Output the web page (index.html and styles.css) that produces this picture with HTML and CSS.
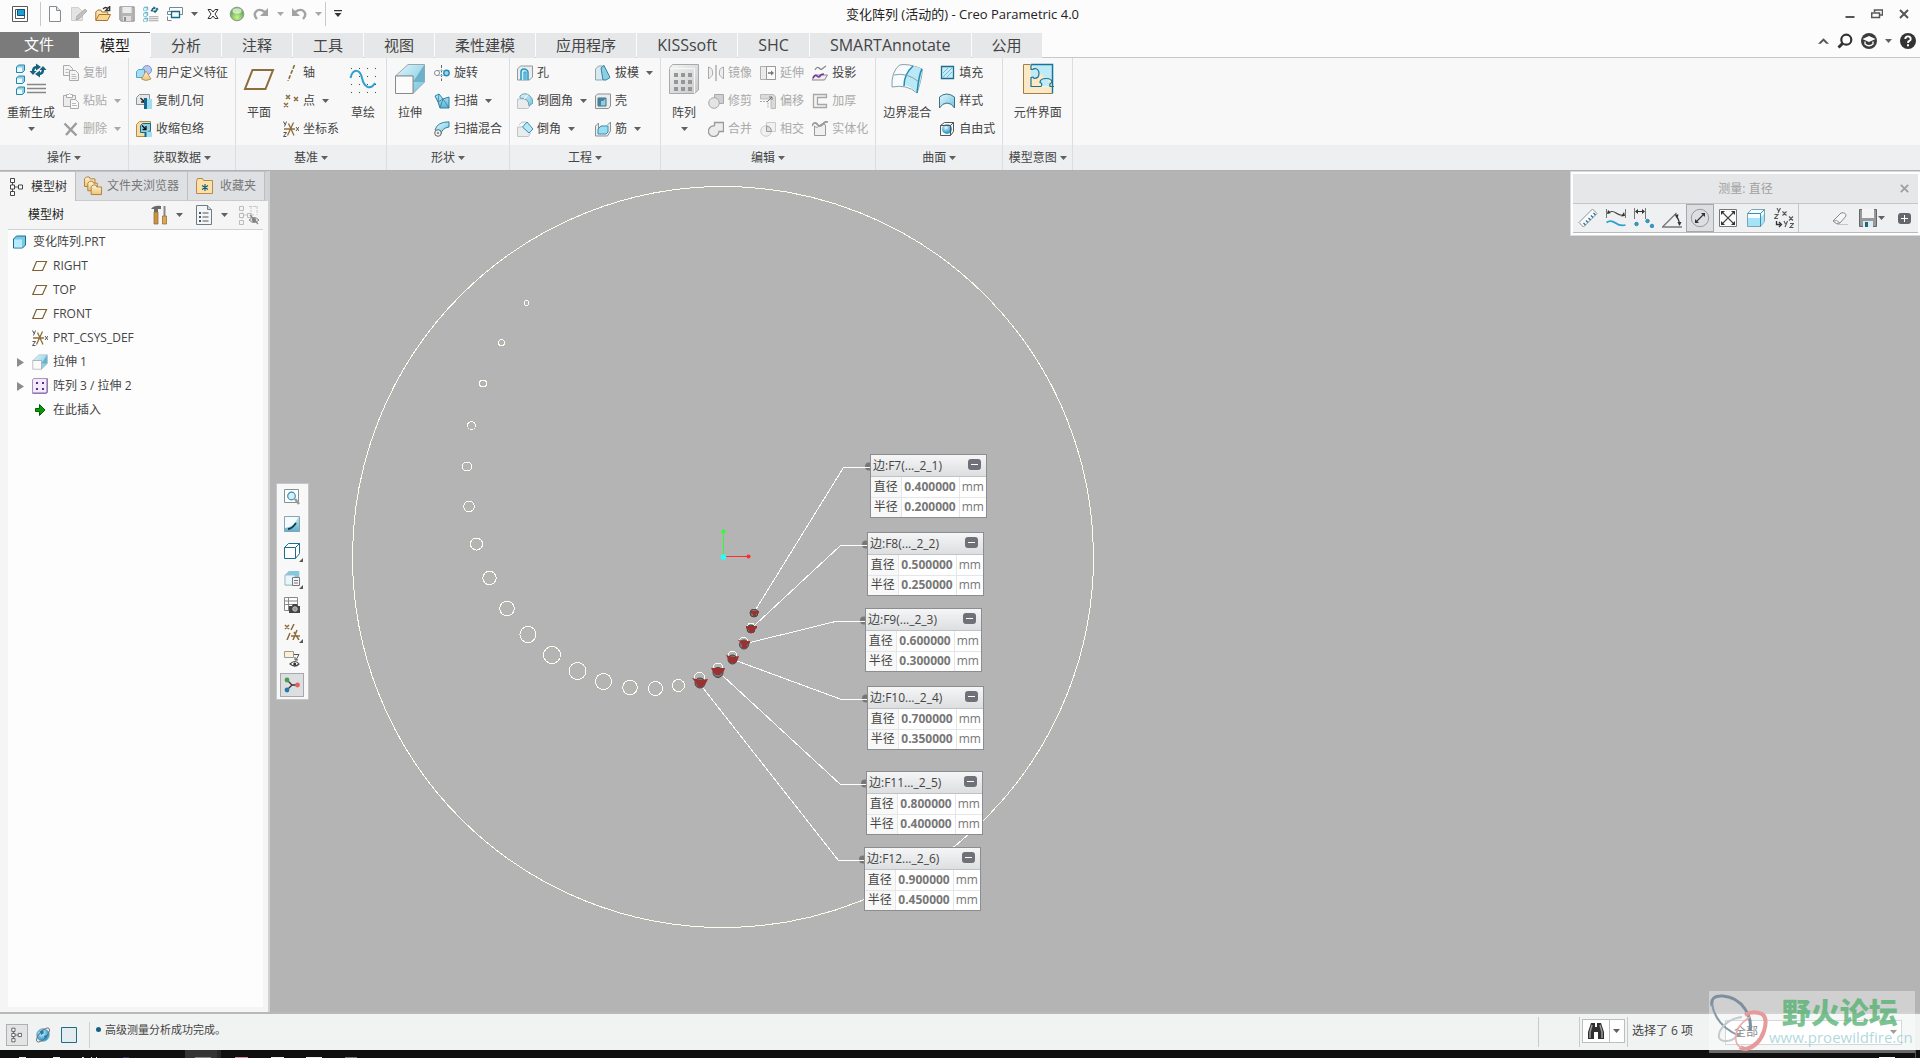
FILE: index.html
```html
<!DOCTYPE html>
<html lang="zh-CN">
<head>
<meta charset="utf-8">
<title>变化阵列 (活动的) - Creo Parametric 4.0</title>
<link rel="stylesheet" href="styles.css">
</head>
<body>
<svg class="sprite" width="0" height="0" aria-hidden="true">
<defs>
<linearGradient id="sky" x1="0" y1="0" x2="1" y2="1"><stop offset="0" stop-color="#e6f7fd"/><stop offset="1" stop-color="#6cc3e0"/></linearGradient>
<linearGradient id="deep" x1="0" y1="0" x2="0" y2="1"><stop offset="0" stop-color="#c3e9f6"/><stop offset="1" stop-color="#5fb0d0"/></linearGradient>
<linearGradient id="steel" x1="0" y1="0" x2="1" y2="1"><stop offset="0" stop-color="#f4f4f4"/><stop offset="1" stop-color="#c6c8ca"/></linearGradient>
<linearGradient id="sand" x1="0" y1="0" x2="0" y2="1"><stop offset="0" stop-color="#fdf3d8"/><stop offset="1" stop-color="#edc377"/></linearGradient>
<radialGradient id="lime" cx=".5" cy=".75"><stop offset="0" stop-color="#c6f58e"/><stop offset="1" stop-color="#6fb356"/></radialGradient>
<radialGradient id="ball" cx=".4" cy=".35"><stop offset="0" stop-color="#e9f9ff"/><stop offset="1" stop-color="#3aa0cb"/></radialGradient>
</defs>
<symbol id="caret" viewBox="0 0 7 4"><path d="M0 0h7L3.500 4z" fill="currentColor"/></symbol>
<symbol id="app" viewBox="0 0 16 16"><path d="M.5.500h15v15H.5z" fill="#fff" stroke="#5a5a5a"/><path d="M3.500 3.500h9v9h-9z" fill="#fff" stroke="#555"/><path d="M5.500 3.500h7v6h-7z" fill="#19a0dc" stroke="#17506c"/></symbol>
<symbol id="new" viewBox="0 0 16 16"><path d="M2.500.5h7l4 4v11h-11z" fill="#fdfdfd" stroke="#858b90"/><path d="M9.500.5v4h4" fill="#dfe3e6" stroke="#858b90"/></symbol>
<symbol id="edit" viewBox="0 0 16 16"><path d="M.5 1.500h7l4 4v9H.5z" fill="#e3e3e3" stroke="#cfcfcf"/><path d="M5 14l1-4 8-7 2 2-8 8z" fill="#c0c0c0" stroke="#a0a0a0" stroke-width=".7"/></symbol>
<symbol id="open" viewBox="0 0 16 16"><path d="M.8 14V6l2-2h3l1 2h6v3" fill="#f8e3b4" stroke="#a9752b"/><path d="M.8 14.500L4 8.500h11.500l-3 6z" fill="#f9d592" stroke="#a9752b"/><path d="M8 3q3-3 5 0M14.700.5v4h-4z" fill="none" stroke="#333" stroke-width="1.300"/></symbol>
<symbol id="save" viewBox="0 0 16 16"><path d="M.8.8h14.400v14.400H2L.8 14z" fill="#b5b5b5" stroke="#979797"/><path d="M3.500 1h9v6h-9z" fill="#ececec"/><path d="M4 10h8v5H4z" fill="#dedede"/><path d="M5 11h2v4H5z" fill="#8e8e8e"/></symbol>
<symbol id="regen" viewBox="0 0 32 32"><g fill="#8fd0e6" stroke="#2486aa"><path d="M1.500 4l2-2h6v5.500l-2 2h-6z"/><path d="M1.500 15l2-2h6v5.500l-2 2h-6z"/><path d="M1.500 26l2-2h6v5.500l-2 2h-6z"/></g><path d="M2 4.500h5v4.500H2zM2 15.500h5V20H2zM2 26.500h5V31H2z" fill="#eafaff"/><path d="M12 21.500h19M12 25.500h19M12 29.500h19" stroke="#878787" stroke-width="1.500"/><path d="M18 9q0-5 4-5M28 6q0 5-4 5" fill="none" stroke="#17627f" stroke-width="2.500"/><path d="M21 .5l5 3.500-5 3.500zM25 7.500v7L20 11zM14.500 8h7L18 12zM24.500 7h7L28 3z" fill="#17627f"/></symbol>
<symbol id="wins" viewBox="0 0 16 16"><g fill="#fff" stroke="#7c878d"><path d="M2.500 4.500v-3h13v7h-3M.5 10.500v4h4M.5 5.500h5v3h-5z"/></g><path d="M4.500 5.500h8v6h-8z" fill="#eefaff" stroke="#15688a" stroke-width="1.300"/></symbol>
<symbol id="closedoc" viewBox="0 0 16 16"><path d="M3 3.500h3L8 6l2-2.500h3L10 8l3 4.500h-3L8 10l-2 2.500H3L6 8z" fill="#fff" stroke="#333"/></symbol>
<symbol id="ballgreen" viewBox="0 0 16 16"><circle cx="8" cy="8" r="6.800" fill="url(#lime)" stroke="#8b9a8b"/><ellipse cx="8" cy="5" rx="4.500" ry="2.700" fill="#fff" opacity=".65"/></symbol>
<symbol id="redo" viewBox="0 0 16 16"><path d="M4 13Q0 9 3 5.500T12 6" fill="none" stroke="#a3a3a3" stroke-width="2.400"/><path d="M15 2v8H7z" fill="#a3a3a3"/></symbol>
<symbol id="undo" viewBox="0 0 16 16"><path d="M12 13q4-4 1-7.500T4 6" fill="none" stroke="#a3a3a3" stroke-width="2.400"/><path d="M1 2v8h8z" fill="#a3a3a3"/></symbol>
<symbol id="more" viewBox="0 0 8 8"><path d="M0 0h8v1.300H0zM.5 3h7L4 7z" fill="#333"/></symbol>
<symbol id="wmin" viewBox="0 0 12 12"><path d="M1.500 8h9v2h-9z" fill="#555"/></symbol>
<symbol id="wrest" viewBox="0 0 12 12"><path d="M3.500 4V2h8v5h-3M.7 5h7.800v4.500H.7z" fill="none" stroke="#555" stroke-width="1.500"/></symbol>
<symbol id="x" viewBox="0 0 12 12"><path d="M2 2l8 8M10 2l-8 8" stroke="currentColor" stroke-width="2"/></symbol>
<symbol id="up" viewBox="0 0 12 6"><path d="M0 6h3l3-3 3 3h3L6 0z" fill="#555"/></symbol>
<symbol id="find" viewBox="0 0 16 16"><circle cx="9.300" cy="6.700" r="5" fill="#fff" stroke="#333" stroke-width="2.200"/><path d="M1.500 14.500l4-4" stroke="#333" stroke-width="3"/></symbol>
<symbol id="cap" viewBox="0 0 16 16"><circle cx="8" cy="8" r="8" fill="#3c3c3c"/><path d="M1.500 6L8 3l6.500 3L8 9z" fill="#fff"/><path d="M4 8.500v2.500q4 3.500 8 0V8.500" fill="none" stroke="#fff" stroke-width="1.300"/></symbol>
<symbol id="help" viewBox="0 0 16 16"><circle cx="8" cy="8" r="8" fill="#333"/><path d="M5.300 6q0-2.600 2.700-2.600T10.700 6q0 1.300-1.500 2Q8 8.500 8 10" fill="none" stroke="#fff" stroke-width="1.900"/><path d="M7 11.300h2v2H7z" fill="#fff"/></symbol>
<symbol id="copy" viewBox="0 0 16 16"><g fill="#f4f4f4" stroke="#aaa"><path d="M.5.500h6l3 3v7h-9z"/><path d="M6.500 5.500h6l3 3v7h-9z"/></g><path d="M2.500 4.500h4M2.500 7.500h3M8.500 9.500h4M8.500 11.500h5M8.500 13.500h5" stroke="#bbb"/></symbol>
<symbol id="paste" viewBox="0 0 16 16"><path d="M.5 2.500h12v11H.5z" fill="#ececec" stroke="#aaa"/><path d="M3.500 1.500h2l1-1 1 1h2v3h-6z" fill="#fff" stroke="#aaa"/><path d="M7.500 6.500h5l3 3v6h-8z" fill="#fafafa" stroke="#aaa"/><path d="M9 10.500h4M9 12.500h5" stroke="#bbb"/></symbol>
<symbol id="del" viewBox="0 0 16 16"><path d="M1.500 2.500l12 12M13.500 2L3 14" stroke="#9c9c9c" stroke-width="2.400"/></symbol>
<symbol id="udf" viewBox="0 0 16 16"><circle cx="11" cy="5" r="4.500" fill="#b9c8ee" stroke="#7f93cc"/><path d="M.5 6.500l2-2h6v8h-8z" fill="#a5def2" stroke="#4da8cb"/><path d="M10 6L5.500 14q4 3 9.500 0z" fill="url(#sand)" stroke="#a98a53" stroke-width=".8"/></symbol>
<symbol id="copygeo" viewBox="0 0 16 16"><path d="M.5 4.500l3-3h10v7l-3 3H.5z" fill="#e5e8eb" stroke="#8e9396"/><path d="M4.500 5l4 4M8.500 5.500V9H5" stroke="#222" fill="none" stroke-width="1.300"/><path d="M9 6h7v10H9z" fill="#9ddcf2"/><path d="M8 5h3v11H8z" fill="#15688a"/></symbol>
<symbol id="shrink" viewBox="0 0 16 16"><path d="M.5 3.500l3-3h11v11l-3 4H.5z" fill="#f7dca4" stroke="#b78b42"/><path d="M4.500 4.500l2-2h8v7l-3 2h-7z" fill="#8fcfe6" stroke="#15688a"/><path d="M6 4.500l4 4M10 5v3.500H6.500" stroke="#111" fill="none" stroke-width="1.300"/><path d="M9 11h7v5H9z" fill="#9fe0f4"/><path d="M9.500 11v5" stroke="#15688a" stroke-width="2"/></symbol>
<symbol id="plane" viewBox="0 0 32 32"><path d="M9.500 7H30l-7.500 19H2z" fill="none" stroke="#8c6d3b" stroke-width="2"/></symbol>
<symbol id="axis" viewBox="0 0 16 16"><path d="M11.500 0L5 16" stroke="#8c6d3b" stroke-width="1.600" stroke-dasharray="4 1.500"/></symbol>
<symbol id="point" viewBox="0 0 16 16"><path d="M3 2l4 4M7 2L3 6M11 4l4 4M15 4l-4 4M1 10l4 4M5 10l-4 4" stroke="#8c6d3b" stroke-width="1.500"/></symbol>
<symbol id="csys" viewBox="0 0 16 16"><path d="M1 8h11M4.500 14.500L10.500 1.500M5.500 2.500L11 14.500" stroke="#8c6d3b" stroke-width="1.300"/><path d="M.5.500l1.500 3M3.500.5L1.500 5.500M.5 11.500h3l-3 4h3M13 6l3 4M16 6l-3 4" fill="none" stroke="#444" stroke-width=".9"/></symbol>
<symbol id="sketch" viewBox="0 0 32 32"><path d="M4 5.500h26M4 13.500h26M4 21.500h26M4 29.500h26" stroke="#444" stroke-dasharray="1 7"/><path d="M3.500 15C6 5 13 6 15 15s8 13 13 5" fill="none" stroke="#2c9fd2" stroke-width="2"/></symbol>
<symbol id="extrude" viewBox="0 0 32 32"><path d="M1.500 13L14 1.500h16.500V19L19 30.500V13z" fill="url(#sky)" stroke="#9aa8ae"/><path d="M30.500 1.500V19H19z" fill="#6cb0ca"/><path d="M1.500 13H19v17.500H1.500z" fill="#fbfbfb" stroke="#8a8a8a"/></symbol>
<symbol id="revolve" viewBox="0 0 16 16"><path d="M7.500 0v16" stroke="#666" stroke-dasharray="3 1.500"/><path d="M3 5.500h10M3 10.500h10" stroke="#9ccbdc"/><circle cx="3" cy="8" r="2.500" fill="#fff" stroke="#889"/><circle cx="12.500" cy="8" r="2.700" fill="#93d7ef" stroke="#2a8ab0" stroke-width="1.400"/></symbol>
<symbol id="sweep" viewBox="0 0 16 16"><path d="M1 3l4-2 4 5 6-2v11H6L4 9z" fill="url(#deep)" stroke="#2a83a5"/><path d="M5 1L4 9M9 6l-5 3M9 6l6 9M9 6L6 15" stroke="#2a83a5" stroke-width=".8" fill="none"/></symbol>
<symbol id="blend" viewBox="0 0 16 16"><path d="M1 9Q3 1 15 .8V6Q8 7 7 13z" fill="url(#sky)" stroke="#2a83a5"/><circle cx="4" cy="12" r="3.300" fill="#eee" stroke="#666"/><circle cx="4" cy="12" r="1" fill="#777"/></symbol>
<symbol id="hole" viewBox="0 0 16 16"><path d="M.5 4l3-3h12v11l-3 3H.5z" fill="#eaecee" stroke="#92989c"/><path d="M4 15V7Q4 4 7 4t4 3v8" fill="#c9eefa" stroke="#2995be" stroke-width="1.500"/><path d="M7 15V7h2v8" fill="#9adcf2" stroke="#2995be"/></symbol>
<symbol id="round" viewBox="0 0 16 16"><path d="M.5 6h8q4 1 4 8l-2 1.500H.5z" fill="#e9ebec" stroke="#bfc4c7"/><path d="M3 3q4-4 9-1 4 3 4 8l-4 3Q12 5 3 5z" fill="url(#sky)" stroke="#6d9eb0"/><path d="M7 6L11 1.500" stroke="#fff"/></symbol>
<symbol id="chamfer" viewBox="0 0 16 16"><path d="M.5 6h5l8 6-2 3.500H.5zM2 4l3-3h4" fill="#e9ebec" stroke="#bfc4c7"/><path d="M5.500 6L10 1l6 7-4 4z" fill="#b7e7f6" stroke="#3a8eac"/></symbol>
<symbol id="draft" viewBox="0 0 16 16"><path d="M.5 4l3-3h6v11l-2 3H.5z" fill="#d7eaf1" stroke="#93a5ad"/><path d="M6 3l3-2.500 6 12-4 2.500H8z" fill="#8fcde3" stroke="#2f86a5"/></symbol>
<symbol id="shell" viewBox="0 0 16 16"><path d="M.5 3l2-2h13v12l-2 2.500H.5z" fill="#ececee" stroke="#8d9194"/><path d="M3 5h8v8H3z" fill="#8fcfe6" stroke="#456c7a"/><path d="M3 5h8l-3 3H6v5H3z" fill="#46829a"/></symbol>
<symbol id="rib" viewBox="0 0 16 16"><path d="M.5 5l3-3v6M12.500 4L15.500 1v9l-3 5H.5V5" fill="#e8ebec" stroke="#8d9194"/><path d="M3 8l3-3h7v6l-2 2H3z" fill="#9bddf0" stroke="#3a90b0"/></symbol>
<symbol id="pattern" viewBox="0 0 32 32"><path d="M1.500 5l3-3.500h26V27l-4 3.500h-25z" fill="url(#steel)" stroke="#a9a9a9"/><path d="M1.500 5.500h25v25" fill="none" stroke="#f8f8f8"/><path d="M6 10h4v4H6zM13 10h4v4h-4zM20 10h4v4h-4zM6 17h4v4H6zM13 17h4v4h-4zM20 17h4v4h-4zM6 24h4v4H6zM13 24h4v4h-4zM20 24h4v4h-4z" fill="#969696"/></symbol>
<symbol id="mirror" viewBox="0 0 16 16"><path d="M.5 14V2q5 1 4 8zM15.500 14V2q-5 1-4 8z" fill="#eee" stroke="#aaa"/><path d="M8 0v16" stroke="#aaa" stroke-width="1.400"/></symbol>
<symbol id="trim" viewBox="0 0 16 16"><path d="M6.500 1.500h9v9h-9z" fill="#d0d0d0" stroke="#a8a8a8"/><circle cx="6" cy="10" r="5.300" fill="#e4e4e4" stroke="#a8a8a8"/></symbol>
<symbol id="merge" viewBox="0 0 16 16"><path d="M6.500 5V1.500h9v9H11A5.300 5.300 0 1 1 6.500 5" fill="#ececec" stroke="#999" stroke-width="1.300"/></symbol>
<symbol id="extend" viewBox="0 0 16 16"><path d="M.5 1.500h15v13H.5z" fill="#ebebeb" stroke="#b0b0b0"/><path d="M6.500 1.500h9v13h-9z" fill="#fafafa" stroke="#999"/><path d="M8 8h4" stroke="#777" stroke-width="1.500"/><path d="M11 5.500L14 8l-3 2.500z" fill="#777"/></symbol>
<symbol id="offset" viewBox="0 0 16 16"><path d="M.5 1.500h13l2 2v12H11V6H.5z" fill="#dadada" stroke="#bbb"/><path d="M0 8.500h8v7" fill="none" stroke="#aaa" stroke-dasharray="2 1"/><path d="M7 9l5-5M9 4h3v3" fill="none" stroke="#777"/></symbol>
<symbol id="intersect" viewBox="0 0 16 16"><path d="M6.500 1.500h9v9h-9z" fill="#f0f0f0" stroke="#ccc"/><circle cx="6" cy="10" r="5.300" fill="#f0f0f0" stroke="#ccc"/><path d="M6.500 5q5 1 4.800 5.500H6.500z" fill="#ddd" stroke="#999"/></symbol>
<symbol id="project" viewBox="0 0 16 16"><path d="M3 5q2-4 4-2t3 1 4-3" fill="none" stroke="#888" stroke-width="1.200"/><path d="M0 15l3-5h12.500l-3 5z" fill="#eee" stroke="#888"/><path d="M1 13q2-4 4-2t3 0 4-2" fill="none" stroke="#7a35a5" stroke-width="1.700"/></symbol>
<symbol id="thicken" viewBox="0 0 16 16"><path d="M1.500 1.500h13v3h-9v7h9v3h-13z" fill="#f3f3f3" stroke="#a6a6a6" stroke-width="1.300"/></symbol>
<symbol id="solid" viewBox="0 0 16 16"><path d="M2.500 5v9.500h11V4Q10 1 8 4 5 8 2.500 5z" fill="#f0f0f0" stroke="#999"/><path d="M0 5q2-5 5-2 3 4 6 0 2-3 5-2" fill="none" stroke="#999" stroke-width="1.800"/></symbol>
<symbol id="boundary" viewBox="0 0 32 32"><path d="M8.500 2Q17 0 31 6q1 6-5 24Q16 21 1 24 0 9 8.500 2z" fill="#f6fcfe" stroke="#8e9ea5"/><path d="M22 3q5 1 9 3 0 9-5 24-5-6-12-8 0-11 8-19z" fill="#b9e9f7"/><path d="M22 3q-9 8-9 20" fill="none" stroke="#238bb4" stroke-width="1.500"/><path d="M3 12q13-3 25 7" fill="none" stroke="#8e9ea5"/><path d="M31 6q-3 5-5 24" fill="none" stroke="#238bb4" stroke-width="1.500"/></symbol>
<symbol id="fill" viewBox="0 0 16 16"><path d="M2.500 1.500h12v12h-12z" fill="#c6ecf8" stroke="#1d6d8f" stroke-width="1.300"/><path d="M4 8l5-5M4 12l9-9M8 12l5-5" stroke="#6dbdd9"/></symbol>
<symbol id="style" viewBox="0 0 16 16"><path d="M.5 4q7-6 15 0v11q-3-5-7.500-5T.5 15z" fill="url(#sky)" stroke="#3b6f84"/></symbol>
<symbol id="freestyle" viewBox="0 0 16 16"><circle cx="8" cy="8" r="5" fill="url(#ball)"/><path d="M1.500 4.500h10v10h-10zM5.500 1.500h9v9M1.500 4.500l4-3M11.500 4.500l3-3M11.500 14.500l3-4" fill="none" stroke="#555"/></symbol>
<symbol id="puzzle" viewBox="0 0 32 32"><path d="M1 1.500h8v22h22v7H1z" fill="#fbe9c6"/><path d="M9 1.500h22.500V23H9z" fill="#bfeaf8"/><path d="M9 1.500v5q3 0 3-1 5 0 5 5t-5 5q0-2-3-1v9h10q2-3-1-4 0-4 6-4t6 4q-3 1-2 4h4" fill="#fbe9c6" stroke="#1c7396" stroke-width="1.200"/><path d="M9 1.500h21.500v29" fill="none" stroke="#1c7396" stroke-width="1.400"/><path d="M8 1.500H1.500v29h29" fill="none" stroke="#a77e3f"/></symbol>
<symbol id="nodes" viewBox="0 0 16 20"><path d="M3.500 3v14M4 10h8" stroke="#555"/><path d="M1.500 1.500h4v4h-4zM1.500 8h4v4h-4zM1.500 14.500h4v4h-4zM9.500 8h4v4h-4z" fill="#fff" stroke="#444"/></symbol>
<symbol id="folders" viewBox="0 0 20 20"><g fill="url(#sand)" stroke="#ad8137"><path d="M.5 2.500l2-2h3l1 2h5v8H.5z"/><path d="M4 7l2-2h3l1 2h4v8H4z"/><path d="M7.500 11l2-2h3l1 2h5v8h-11z"/></g></symbol>
<symbol id="fav" viewBox="0 0 18 18"><path d="M.5 4.500l1-3h5l1 2h9v13H.5z" fill="#fbe0aa" stroke="#b78a45"/><path d="M9 7v7M6 8.500l6 4M12 8.500l-6 4" stroke="#125a78" stroke-width="1.100"/></symbol>
<symbol id="tools" viewBox="0 0 20 20"><path d="M2 4q3-4 10-3v3H9v3H5V4z" fill="#6a6a6a"/><path d="M5 7h4v12H5z" fill="#c99545" stroke="#8d6428" stroke-width=".7"/><path d="M14.500 1h2v10h-2z" fill="#888"/><path d="M13.500 11h4v8h-4z" fill="#dba85a" stroke="#8d6428" stroke-width=".7"/></symbol>
<symbol id="list" viewBox="0 0 16 20"><path d="M.5.500h11l4 4v15H.5z" fill="#f2f6f8" stroke="#6f7c83"/><path d="M11.500.5v4h4" fill="#cdd6da" stroke="#6f7c83"/><path d="M6.500 8h6M6.500 12h6M6.500 16h6" stroke="#555"/><path d="M3 7h2v2H3zM3 11h2v2H3zM3 15h2v2H3z" fill="#555"/></symbol>
<symbol id="hidden" viewBox="0 0 20 20"><path d="M3 3v14M5 10h10M10 1.500h9M12 1v6M18 1v9" fill="none" stroke="#c8c8c8" stroke-dasharray="3 1"/><path d="M.5 1.500h4v4h-4zM.5 8.500h4v4h-4zM.5 15.500h4v4h-4zM8.500 8.500h4v4h-4z" fill="#f4f4f4" stroke="#bbb"/><path d="M10 15q5-5 10 0-5 5-10 0z" fill="#ddd" stroke="#888"/><circle cx="15" cy="15" r="2" fill="#777"/><path d="M11 10l8 9" stroke="#888" stroke-width="1.200"/></symbol>
<symbol id="part" viewBox="0 0 16 16"><path d="M1.500 5l3-3h9v9l-3 3h-9z" fill="#79c9e6" stroke="#1a6e8e"/><path d="M2 5.500h8v8H2z" fill="#b5ebfb"/></symbol>
<symbol id="pl" viewBox="0 0 16 16"><path d="M4.500 3.500h10l-4 9H.8z" fill="none" stroke="#7d6030" stroke-width="1.200"/></symbol>
<symbol id="patsmall" viewBox="0 0 16 16"><path d="M.5 2l1-1.500h14V14L14 15.500H.5z" fill="#f2ecfa" stroke="#a795bf"/><path d="M15 1v14H1" fill="none" stroke="#8061aa"/><path d="M4 4h2v2H4zM10 4h2v2h-2zM4 10h2v2H4zM10 10h2v2h-2z" fill="#5b2d8c"/></symbol>
<symbol id="insert" viewBox="0 0 16 16"><path d="M3.500 6.500h4v-4l5.500 5.500-5.500 5.500v-4h-4z" fill="#089908" stroke="#056005"/></symbol>
<symbol id="tri" viewBox="0 0 7 9"><path d="M0 0l7 4.500L0 9z" fill="#8c8c8c"/></symbol>
<symbol id="refit" viewBox="0 0 16 16"><path d="M.5.500h14v13H.5z" fill="#fff" stroke="#8a8f93"/><circle cx="7.500" cy="7" r="3.800" fill="#d4f1fb" stroke="#3b8fb0" stroke-width="1.200"/><path d="M11 10l4 5" stroke="#999" stroke-width="2.500"/></symbol>
<symbol id="repaint" viewBox="0 0 16 16"><path d="M.5.500h15v15H.5z" fill="url(#deep)" stroke="#8aa3ad"/><path d="M1 1h13Q11 11 1 12z" fill="#f3fbfe"/><path d="M4 13q4 0 8-6" fill="none" stroke="#143e50" stroke-width="1.800"/></symbol>
<symbol id="cube" viewBox="0 0 16 16"><path d="M.5 4.500l4-4h11v10l-4 5H.5zM.5 4.500h11v11M11.500 4.500l4-4" fill="#fff" stroke="#1b6c8e"/></symbol>
<symbol id="saved" viewBox="0 0 16 16"><path d="M.8 5l4-4h10.500v10l-4 4.500H.8z" fill="#83c9e2"/><path d="M1 5h10v10H1z" fill="#e6f7fc" stroke="#a9bcc4"/><path d="M8.500 7.500h7v8h-7z" fill="#f5f5f5" stroke="#777"/><path d="M10 10.500h4M10 13h4" stroke="#777"/></symbol>
<symbol id="viewmgr" viewBox="0 0 16 16"><path d="M.5.500h13v13H.5zM.5 4h13M.5 7.500h13M4.500 0v13" fill="#fff" stroke="#888"/><path d="M5 9h3l1-2h4l1 2h2v7H5z" fill="#444"/><circle cx="11" cy="12" r="2.300" fill="#999" stroke="#ddd" stroke-width=".7"/></symbol>
<symbol id="datumshow" viewBox="0 0 16 16"><path d="M1 1l4 4M5 1L1 5M10 0L7 6M6 9L3 16M7 12h9M9 16l4-10M10 8l5 8" stroke="#8c6d3b" stroke-width="1.500"/></symbol>
<symbol id="annoshow" viewBox="0 0 16 16"><path d="M.5.500h9v6h-9z" fill="#fdf1d2" stroke="#999"/><path d="M10 3.500h5L12 9M11 6v3h3" fill="none" stroke="#555"/><path d="M6 13q5-5 9 0-4 4-9 0z" fill="#fff" stroke="#444" stroke-width="1.200"/><circle cx="10.700" cy="13" r="1.500" fill="#333"/></symbol>
<symbol id="spin" viewBox="0 0 16 16"><path d="M3 3l5 5-5 5M8 8h6" fill="none" stroke="#333" stroke-width="1.300"/><circle cx="3" cy="3" r="2.400" fill="#499c4d"/><circle cx="3" cy="13" r="2.400" fill="#2479a5"/><circle cx="13.500" cy="8" r="2.400" fill="#e36060"/></symbol>
<symbol id="ruler" viewBox="0 0 20 20"><path d="M1 14.500L14.500 1l4.500 4.500L5.500 19z" fill="#f9fafb" stroke="#8e9498"/><path d="M7.500 17l-2-2M10 14.500l-2-2M12.500 12l-2-2M15 9.500l-2-2M17.500 7l-2-2" stroke="#276d8c" stroke-width="1.200"/></symbol>
<symbol id="length" viewBox="0 0 20 20"><path d="M.5 1v9M19.500 1v9" stroke="#777"/><path d="M2 5q4-3 8 0t8 2" fill="none" stroke="#444" stroke-width="1.200"/><path d="M1 6l1-4 3 3zM19 8l-4 .5L18 4z" fill="#333"/><path d="M.5 14.500q4-3 9 .5t10 2" fill="none" stroke="#2c9fd2" stroke-width="1.800"/></symbol>
<symbol id="distance" viewBox="0 0 20 20"><path d="M.5 0v11M11.500 0v11" stroke="#777"/><path d="M2 3.500h8" stroke="#333"/><path d="M1 3.500l3-2.500v5zM11 3.500L8 1v5z" fill="#333"/><g fill="#2c9fd2" stroke="#16688a" stroke-width=".6"><circle cx="2.500" cy="16" r="1.800"/><circle cx="13.500" cy="13" r="1.800"/><circle cx="18" cy="18" r="1.800"/></g></symbol>
<symbol id="angle" viewBox="0 0 20 20"><path d="M.5 19L14.500 5M0 19h20" stroke="#777" stroke-width="1.300"/><path d="M14 8q3.500 4 3.500 9" fill="none" stroke="#333" stroke-width="1.200"/><path d="M12.500 6.500h4l-1 4zM15.500 14h4l-2 4z" fill="#333"/></symbol>
<symbol id="diam" viewBox="0 0 20 20"><circle cx="10" cy="10" r="8.700" fill="none" stroke="#999"/><path d="M6 14l8-8" stroke="#333" stroke-width="1.100"/><path d="M15 5v4l-4-4zM5 15v-4l4 4z" fill="#333"/></symbol>
<symbol id="area" viewBox="0 0 20 20"><path d="M1.500 1.500h17v17h-17z" fill="#fafafa" stroke="#777"/><path d="M4 4l12 12M16 4L4 16" stroke="#444" stroke-width="1.100"/><path d="M3 3h4L3 7zM17 3v4l-4-4zM3 17v-4l4 4zM17 17h-4l4-4z" fill="#333"/></symbol>
<symbol id="volume" viewBox="0 0 20 20"><path d="M1.500 5.500l4-4h13v12l-4 5h-13z" fill="#f5fcff" stroke="#7aa3b3"/><path d="M2 10h12l4-4v8l-4 4H2z" fill="#a5e4f8"/><path d="M1.500 5.500h13v13M14.500 5.500l4-4" fill="none" stroke="#3a8fb0"/></symbol>
<symbol id="xform" viewBox="0 0 20 20"><path d="M3 0l1.500 3M6.500 0L4 5M8.500 3.500l4 4M12.500 3.500l-4 4M.5 6.500h3.500l-3.500 4H4M15 8.500l4 4M19 8.500l-4 4M10 13l1.500 3M13.500 13l-2.500 6M16 15.500h3.500l-3.500 4h3.500" fill="none" stroke="#555" stroke-width="1.100"/><path d="M2.500 13v3.500h4M5 14l2.500 2.500L5 19" fill="none" stroke="#333" stroke-width="1.300"/></symbol>
<symbol id="eraser" viewBox="0 0 16 16"><path d="M1 11l8-8q5-1 5 3l-6 7q-4 2-7-2z" fill="#f6f6f6" stroke="#888"/><path d="M5 14.500h11" stroke="#c5c5c5"/><path d="M1 11q4-2 7 2" fill="none" stroke="#999"/></symbol>
<symbol id="disk" viewBox="0 0 18 18"><path d="M.5.500h17v17H.5z" fill="#999" stroke="#666"/><path d="M3 0h12v9H3z" fill="#f4f4f4"/><path d="M4 12h10v6H4z" fill="#d7eef6"/><path d="M6 13h3v5H6z" fill="#26627c"/></symbol>
<symbol id="globe" viewBox="0 0 18 18"><circle cx="9" cy="9" r="7" fill="url(#ball)" stroke="#5aa5c5"/><path d="M5 5l4-2 1 4-3 2zM10 10l4-1-2 5z" fill="#187fb4"/><ellipse cx="9" cy="9" rx="10" ry="4" transform="rotate(-48 9 9)" fill="none" stroke="#666"/></symbol>
<symbol id="blank" viewBox="0 0 16 16"><path d="M.5.500h15v15H.5z" fill="#e3ecf0" stroke="#226a86"/></symbol>
<symbol id="bino" viewBox="0 0 18 18"><path d="M4 1h4v4h2V1h4l3 9v7h-6v-7H7v7H1v-7z" fill="#303030"/><path d="M5 3L3 10v6M13 3l2 7v6" fill="none" stroke="#999" stroke-width="1.500"/></symbol>
</svg>

<header class="titlebar">
  <div class="quick">
    <button class="qb" aria-label="系统"><svg><use href="#app"/></svg></button>
    <i class="vsep"></i>
    <button class="qb" aria-label="新建"><svg><use href="#new"/></svg></button>
    <button class="qb" aria-label="编辑"><svg><use href="#edit"/></svg></button>
    <button class="qb" aria-label="打开"><svg><use href="#open"/></svg></button>
    <button class="qb" aria-label="保存"><svg><use href="#save"/></svg></button>
    <button class="qb" aria-label="再生"><svg><use href="#regen"/></svg></button>
    <button class="qb" aria-label="窗口"><svg><use href="#wins"/></svg></button>
    <button class="qc" aria-label="窗口列表"><svg class="caret"><use href="#caret"/></svg></button>
    <button class="qb" aria-label="关闭窗口"><svg><use href="#closedoc"/></svg></button>
    <button class="qb" aria-label="状态"><svg><use href="#ballgreen"/></svg></button>
    <button class="qb" aria-label="重做"><svg><use href="#redo"/></svg></button>
    <button class="qc off" aria-label="重做列表"><svg class="caret"><use href="#caret"/></svg></button>
    <button class="qb" aria-label="撤销"><svg><use href="#undo"/></svg></button>
    <button class="qc off" aria-label="撤销列表"><svg class="caret"><use href="#caret"/></svg></button>
    <i class="vsep"></i>
    <button class="qc" aria-label="自定义"><svg class="more"><use href="#more"/></svg></button>
  </div>
  <h1 class="title">变化阵列 (活动的) - Creo Parametric 4.0</h1>
  <div class="winctl">
    <button aria-label="最小化"><svg><use href="#wmin"/></svg></button>
    <button aria-label="还原"><svg><use href="#wrest"/></svg></button>
    <button aria-label="关闭"><svg><use href="#x"/></svg></button>
  </div>
</header>

<nav class="tabs">
  <button class="tab file">文件</button>
  <button class="tab active">模型</button>
  <button class="tab">分析</button>
  <button class="tab">注释</button>
  <button class="tab">工具</button>
  <button class="tab">视图</button>
  <button class="tab">柔性建模</button>
  <button class="tab">应用程序</button>
  <button class="tab latin">KISSsoft</button>
  <button class="tab latin">SHC</button>
  <button class="tab latin">SMARTAnnotate</button>
  <button class="tab">公用</button>
  <div class="assist">
    <button aria-label="折叠功能区"><svg class="up"><use href="#up"/></svg></button>
    <button aria-label="搜索"><svg><use href="#find"/></svg></button>
    <button aria-label="学习"><svg><use href="#cap"/></svg></button>
    <button aria-label="学习列表"><svg class="caret"><use href="#caret"/></svg></button>
    <button aria-label="帮助"><svg><use href="#help"/></svg></button>
  </div>
</nav>

<section class="ribbon">
  <div class="group">
    <div class="tools">
      <button class="big wide"><svg><use href="#regen"/></svg>重新生成<svg class="caret"><use href="#caret"/></svg></button>
      <div class="col">
        <button class="sm off"><svg><use href="#copy"/></svg>复制</button>
        <button class="sm off"><svg><use href="#paste"/></svg>粘贴<svg class="caret"><use href="#caret"/></svg></button>
        <button class="sm off"><svg><use href="#del"/></svg>删除<svg class="caret"><use href="#caret"/></svg></button>
      </div>
    </div>
    <button class="glabel">操作<svg class="caret"><use href="#caret"/></svg></button>
  </div>
  <div class="group">
    <div class="tools">
      <div class="col">
        <button class="sm"><svg><use href="#udf"/></svg>用户定义特征</button>
        <button class="sm"><svg><use href="#copygeo"/></svg>复制几何</button>
        <button class="sm"><svg><use href="#shrink"/></svg>收缩包络</button>
      </div>
    </div>
    <button class="glabel">获取数据<svg class="caret"><use href="#caret"/></svg></button>
  </div>
  <div class="group">
    <div class="tools">
      <button class="big"><svg><use href="#plane"/></svg>平面</button>
      <div class="col">
        <button class="sm"><svg><use href="#axis"/></svg>轴</button>
        <button class="sm"><svg><use href="#point"/></svg>点<svg class="caret"><use href="#caret"/></svg></button>
        <button class="sm"><svg><use href="#csys"/></svg>坐标系</button>
      </div>
      <button class="big"><svg><use href="#sketch"/></svg>草绘</button>
    </div>
    <button class="glabel">基准<svg class="caret"><use href="#caret"/></svg></button>
  </div>
  <div class="group">
    <div class="tools">
      <button class="big"><svg><use href="#extrude"/></svg>拉伸</button>
      <div class="col">
        <button class="sm"><svg><use href="#revolve"/></svg>旋转</button>
        <button class="sm"><svg><use href="#sweep"/></svg>扫描<svg class="caret"><use href="#caret"/></svg></button>
        <button class="sm"><svg><use href="#blend"/></svg>扫描混合</button>
      </div>
    </div>
    <button class="glabel">形状<svg class="caret"><use href="#caret"/></svg></button>
  </div>
  <div class="group">
    <div class="tools">
      <div class="col">
        <button class="sm"><svg><use href="#hole"/></svg>孔</button>
        <button class="sm"><svg><use href="#round"/></svg>倒圆角<svg class="caret"><use href="#caret"/></svg></button>
        <button class="sm"><svg><use href="#chamfer"/></svg>倒角<svg class="caret"><use href="#caret"/></svg></button>
      </div>
      <div class="col">
        <button class="sm"><svg><use href="#draft"/></svg>拔模<svg class="caret"><use href="#caret"/></svg></button>
        <button class="sm"><svg><use href="#shell"/></svg>壳</button>
        <button class="sm"><svg><use href="#rib"/></svg>筋<svg class="caret"><use href="#caret"/></svg></button>
      </div>
    </div>
    <button class="glabel">工程<svg class="caret"><use href="#caret"/></svg></button>
  </div>
  <div class="group">
    <div class="tools">
      <button class="big"><svg><use href="#pattern"/></svg>阵列<svg class="caret"><use href="#caret"/></svg></button>
      <div class="col">
        <button class="sm off"><svg><use href="#mirror"/></svg>镜像</button>
        <button class="sm off"><svg><use href="#trim"/></svg>修剪</button>
        <button class="sm off"><svg><use href="#merge"/></svg>合并</button>
      </div>
      <div class="col">
        <button class="sm off"><svg><use href="#extend"/></svg>延伸</button>
        <button class="sm off"><svg><use href="#offset"/></svg>偏移</button>
        <button class="sm off"><svg><use href="#intersect"/></svg>相交</button>
      </div>
      <div class="col">
        <button class="sm"><svg><use href="#project"/></svg>投影</button>
        <button class="sm off"><svg><use href="#thicken"/></svg>加厚</button>
        <button class="sm off"><svg><use href="#solid"/></svg>实体化</button>
      </div>
    </div>
    <button class="glabel">编辑<svg class="caret"><use href="#caret"/></svg></button>
  </div>
  <div class="group">
    <div class="tools">
      <button class="big wide"><svg><use href="#boundary"/></svg>边界混合</button>
      <div class="col">
        <button class="sm"><svg><use href="#fill"/></svg>填充</button>
        <button class="sm"><svg><use href="#style"/></svg>样式</button>
        <button class="sm"><svg><use href="#freestyle"/></svg>自由式</button>
      </div>
    </div>
    <button class="glabel">曲面<svg class="caret"><use href="#caret"/></svg></button>
  </div>
  <div class="group">
    <div class="tools">
      <button class="big wide"><svg><use href="#puzzle"/></svg>元件界面</button>
    </div>
    <button class="glabel">模型意图<svg class="caret"><use href="#caret"/></svg></button>
  </div>
</section>

<main class="work">
  <aside class="nav">
    <div class="navtabs">
      <button class="ntab active"><svg class="i-nodes"><use href="#nodes"/></svg>模型树</button>
      <button class="ntab"><svg class="i-folders"><use href="#folders"/></svg>文件夹浏览器</button>
      <button class="ntab"><svg class="i-fav"><use href="#fav"/></svg>收藏夹</button>
    </div>
    <div class="navhead">
      <h2>模型树</h2>
      <button aria-label="设置"><svg class="i20"><use href="#tools"/></svg><svg class="caret"><use href="#caret"/></svg></button>
      <button aria-label="显示"><svg class="i20"><use href="#list"/></svg><svg class="caret"><use href="#caret"/></svg></button>
      <button aria-label="隐藏项"><svg class="i20"><use href="#hidden"/></svg></button>
    </div>
    <ul class="tree">
      <li class="root"><svg><use href="#part"/></svg>变化阵列.PRT</li>
      <li><i class="exp"></i><svg><use href="#pl"/></svg>RIGHT</li>
      <li><i class="exp"></i><svg><use href="#pl"/></svg>TOP</li>
      <li><i class="exp"></i><svg><use href="#pl"/></svg>FRONT</li>
      <li><i class="exp"></i><svg><use href="#csys"/></svg>PRT_CSYS_DEF</li>
      <li><i class="exp"><svg><use href="#tri"/></svg></i><svg><use href="#extrude"/></svg>拉伸 1</li>
      <li><i class="exp"><svg><use href="#tri"/></svg></i><svg><use href="#patsmall"/></svg>阵列 3 / 拉伸 2</li>
      <li><i class="exp"></i><svg><use href="#insert"/></svg>在此插入</li>
    </ul>
  </aside>

  <section class="canvas">
    <svg class="scene">
      <g transform="translate(-270 -171)">
        <g fill="none" stroke="#fffff0" shape-rendering="crispEdges">
          <circle cx="723" cy="557" r="370.500"/>
          <circle cx="526.500" cy="303" r="2.500"/><circle cx="501.500" cy="342.500" r="3"/><circle cx="483" cy="383.500" r="3.500"/>
          <circle cx="471.500" cy="425.500" r="4"/><circle cx="467" cy="466.500" r="4.500"/><circle cx="469" cy="506.500" r="5.300"/>
          <circle cx="476.500" cy="544" r="6"/><circle cx="489.500" cy="578" r="6.700"/><circle cx="507" cy="608.500" r="7.300"/>
          <circle cx="528" cy="634.500" r="8"/><circle cx="552" cy="655" r="8.500"/><circle cx="577.500" cy="671" r="8.500"/>
          <circle cx="603.500" cy="681.500" r="8"/><circle cx="630" cy="687.500" r="7.300"/><circle cx="655.500" cy="688.500" r="7"/>
          <circle cx="678.500" cy="685.500" r="6"/><circle cx="699.500" cy="678" r="5.500"/><circle cx="718" cy="668" r="5"/>
          <circle cx="732.500" cy="656" r="4.500"/><circle cx="743.500" cy="641" r="4"/><circle cx="751" cy="626.500" r="3.300"/><circle cx="754" cy="611.500" r="2.700"/>
        </g>
        <g fill="none" stroke="#fff" shape-rendering="crispEdges">
          <path d="M756 609L843.500 467.500H870"/><path d="M755 625L840.500 545.500H867"/><path d="M750 642.500L835.500 621.500H865"/>
          <path d="M737 661L841.500 699.500H867"/><path d="M723 676L840.500 784.500H866"/><path d="M703 688L838.500 860.500H864"/>
        </g>
        <g fill="#777" stroke="#444">
          <circle cx="754" cy="613" r="4"/><circle cx="751" cy="629" r="4"/><circle cx="744" cy="644.500" r="4.500"/>
          <circle cx="732.500" cy="659.500" r="4.500"/><circle cx="718" cy="672.500" r="5"/><circle cx="700" cy="683" r="5"/>
        </g>
        <g fill="#9c3131">
          <path d="M750 611h9v2l-3 1v2h-3v-2l-3-1z"/><path d="M746 626h11v2l-3 2v3h-5v-3l-3-2z"/><path d="M738 640l6 1 6 0v2l-3 2v3h-5v-3z"/>
          <path d="M726 655l7 2 6-1-1 3-3 4h-5l-2-4z"/><path d="M711 668h14l-1 3-4 4h-4l-3-3z"/><path d="M692 678l8 2 8-1-2 4-4 4h-4l-2-4z"/>
        </g>
        <path d="M723.500 531v26" stroke="#2cff2c"/><circle cx="723.500" cy="531.500" r="2" fill="#2cff2c"/>
        <path d="M724 556.500h24" stroke="#ff2c2c"/><circle cx="748.500" cy="556.500" r="2" fill="#ff2c2c"/>
        <circle cx="723.500" cy="557" r="2.700" fill="#2ff"/>
        <g fill="#777">
          <circle cx="869" cy="466.500" r="4"/><circle cx="866" cy="544.500" r="4"/><circle cx="864" cy="620.500" r="4"/>
          <circle cx="866" cy="698.500" r="4"/><circle cx="865" cy="783.500" r="4"/><circle cx="863" cy="859.500" r="4"/>
        </g>
        <path d="M864 467.500h6M861 545.500h6M859 621.500h6M861 699.500h6M860 784.500h6M858 860.500h6" stroke="#fff"/>
      </g>
    </svg>

    <div class="viewbar">
      <button aria-label="重新调整"><svg><use href="#refit"/></svg></button>
      <button aria-label="重画"><svg><use href="#repaint"/></svg></button>
      <button class="drop" aria-label="显示样式"><svg><use href="#cube"/></svg></button>
      <button class="drop" aria-label="已保存方向"><svg><use href="#saved"/></svg></button>
      <button aria-label="视图管理器"><svg><use href="#viewmgr"/></svg></button>
      <button class="drop" aria-label="基准显示"><svg><use href="#datumshow"/></svg></button>
      <button aria-label="注释显示"><svg><use href="#annoshow"/></svg></button>
      <button class="on" aria-label="旋转中心"><svg><use href="#spin"/></svg></button>
    </div>

    <div class="card c1"><div class="chead"><span>边:F7(..._2_1)</span><button aria-label="折叠"></button></div>
      <table><tr><th>直径</th><td>0.400000</td><td class="u">mm</td></tr><tr><th>半径</th><td>0.200000</td><td class="u">mm</td></tr></table></div>
    <div class="card c2"><div class="chead"><span>边:F8(..._2_2)</span><button aria-label="折叠"></button></div>
      <table><tr><th>直径</th><td>0.500000</td><td class="u">mm</td></tr><tr><th>半径</th><td>0.250000</td><td class="u">mm</td></tr></table></div>
    <div class="card c3"><div class="chead"><span>边:F9(..._2_3)</span><button aria-label="折叠"></button></div>
      <table><tr><th>直径</th><td>0.600000</td><td class="u">mm</td></tr><tr><th>半径</th><td>0.300000</td><td class="u">mm</td></tr></table></div>
    <div class="card c4"><div class="chead"><span>边:F10..._2_4)</span><button aria-label="折叠"></button></div>
      <table><tr><th>直径</th><td>0.700000</td><td class="u">mm</td></tr><tr><th>半径</th><td>0.350000</td><td class="u">mm</td></tr></table></div>
    <div class="card c5"><div class="chead"><span>边:F11..._2_5)</span><button aria-label="折叠"></button></div>
      <table><tr><th>直径</th><td>0.800000</td><td class="u">mm</td></tr><tr><th>半径</th><td>0.400000</td><td class="u">mm</td></tr></table></div>
    <div class="card c6"><div class="chead"><span>边:F12..._2_6)</span><button aria-label="折叠"></button></div>
      <table><tr><th>直径</th><td>0.900000</td><td class="u">mm</td></tr><tr><th>半径</th><td>0.450000</td><td class="u">mm</td></tr></table></div>

    <div class="measure">
      <div class="mtitle"><span>测量: 直径</span><button aria-label="关闭"><svg><use href="#x"/></svg></button></div>
      <div class="mbar">
        <button aria-label="汇总"><svg><use href="#ruler"/></svg></button>
        <button aria-label="长度"><svg><use href="#length"/></svg></button>
        <button aria-label="距离"><svg><use href="#distance"/></svg></button>
        <button aria-label="角度"><svg><use href="#angle"/></svg></button>
        <button class="on" aria-label="直径"><svg><use href="#diam"/></svg></button>
        <button aria-label="面积"><svg><use href="#area"/></svg></button>
        <button aria-label="体积"><svg><use href="#volume"/></svg></button>
        <button aria-label="变换"><svg><use href="#xform"/></svg></button>
        <i class="msep"></i>
        <button aria-label="清除"><svg class="i16"><use href="#eraser"/></svg></button>
        <button class="msave" aria-label="保存"><svg><use href="#disk"/></svg><svg class="caret"><use href="#caret"/></svg></button>
        <button aria-label="展开"><b class="plus"></b></button>
      </div>
    </div>
  </section>
</main>

<footer class="status">
  <button class="sb on" aria-label="导航器"><svg class="i16"><use href="#nodes"/></svg></button>
  <button class="sb" aria-label="浏览器"><svg class="i16"><use href="#globe"/></svg></button>
  <button class="sb" aria-label="全屏"><svg class="i16"><use href="#blank"/></svg></button>
  <p class="msg">高级测量分析成功完成。</p>
  <i class="ssep far"></i>
  <i class="ssep"></i>
  <div class="search">
    <button aria-label="查找"><svg class="i18"><use href="#bino"/></svg></button>
    <button aria-label="查找选项"><svg class="caret"><use href="#caret"/></svg></button>
  </div>
  <i class="ssep near"></i>
  <span class="sel">选择了 6 项</span>
  <div class="filter">
    <select aria-label="选择过滤器"><option>全部</option></select>
    <svg class="caret"><use href="#caret"/></svg>
  </div>
</footer>
<div class="taskbar">
  <svg class="bits">
    <path d="M185 0h32v8h-32z" fill="#333"/><path d="M217 0h4v8h-4z" fill="#262626"/>
    <path d="M195 7h16v1h-16z" fill="#888"/><path d="M235 7h13v1h-13z" fill="#d98aa4"/>
    <path d="M19 7h7v1h-7zM53 7h7v1h-7zM82 7h2v1h-2zM91 7h1v1h-1zM96 7h1v1h-1zM271 7h13v1h-13zM306 7h16v1h-16z" fill="#eee"/>
    <path d="M123 7h6v1h-6z" fill="#336"/><path d="M345 7h12v1h-12z" fill="#777"/>
  </svg>
  <svg class="bits tray"><path d="M0 7h16v1H0z" fill="#fff"/><path d="M36 0h1v8h-1z" fill="#555"/></svg>
</div>

<div class="watermark">
  <svg class="rings" viewBox="0 0 60 60" fill="none">
    <path d="M3 15Q1 4 14 5q14 1 22 13 7 10 5 22" stroke="#7d8f9e" stroke-width="3"/>
    <path d="M3 13q2 14 14 24 6 5 14 8" stroke="#8a99a6" stroke-width="2"/>
    <path d="M33 26q-16 2-22 14-4 10 6 10 6 0 10-4" stroke="#c3cbd1" stroke-width="2"/>
    <path d="M36 24q8-5 17-1 6 4 2 17-5 15-18 18-4 0-6-2" stroke="#e59a9b" stroke-width="4"/>
    <path d="M41 26q-16 10-14 24 1 5 6 7" stroke="#e9adae" stroke-width="1.500"/>
  </svg>
  <div class="wtext"><strong>野火论坛</strong><span>www.proewildfire.cn</span></div>
</div>
</body>
</html>
```
FILE: styles.css
```css
* { box-sizing: border-box; }
body {
  margin: 0;
  min-height: 100vh;
  display: flex;
  flex-direction: column;
  position: relative;
  background: #fcfcfc;
  color: #444;
  font: 12px/16px "Open Sans", "Noto Sans CJK SC", sans-serif;
}
button, select { font: inherit; color: inherit; border: 0; padding: 0; margin: 0; background: none; }
button { display: flex; align-items: center; justify-content: center; white-space: nowrap; }
svg { width: 16px; height: 16px; flex: none; display: block; overflow: visible; }
svg.caret { width: 7px; height: 4px; color: #606060; }
.off svg.caret { color: #a8a8a8; }
.sprite { position: absolute; width: 0; height: 0; }
svg.i16 { width: 16px; height: 16px; }
svg.i18 { width: 18px; height: 18px; }
svg.i20 { width: 20px; height: 20px; }

/* Title bar */
.titlebar { display: grid; grid-template-columns: 1fr auto 1fr; height: 32px; padding: 0 3px 4px 8px; align-items: center; }
.quick { display: flex; align-items: center; }
.qb { width: 24px; height: 24px; }
.qc { width: 14px; height: 24px; }
.vsep { width: 1px; height: 24px; background: #c8c8c8; margin-left: 8px; margin-right: 2px; }
.qc + .vsep { margin-left: 0; margin-right: 5px; }
svg.more { width: 8px; height: 8px; }
.title { margin: 0; font-size: 13px; line-height: 20px; font-weight: 400; color: #222; }
.winctl { display: flex; justify-content: flex-end; color: #555; }
.winctl button { width: 27px; height: 24px; }
.winctl svg { width: 12px; height: 12px; }

/* Ribbon tabs */
.tabs { display: flex; gap: 1px; height: 26px; background: linear-gradient(#c8c8c8, #c8c8c8) bottom / 100% 1px no-repeat; }
.tab { padding: 0 20px 2px; font-size: 15px; line-height: 20px; color: #444; background: #e6e7e9; height: 25px; margin-top: 1px; }
.tab.latin { font-size: 16px; }
.tab.file { padding: 0 25px 2px 24px; background: #7b7b7b; color: #fff; margin-top: 0; height: 26px; }
.tab.active { background: #f9f9f9; color: #222; border-top: 1px solid #666; margin-top: 0; height: 26px; }
.assist { margin-left: auto; display: flex; align-items: center; gap: 8px; padding: 0 4px 8px 0; }
.assist button { height: 18px; }
svg.up { width: 11px; height: 6px; }

/* Ribbon */
.ribbon { display: flex; background: linear-gradient(#f8f8f8 87px, #eeeff1 87px); height: 113px; border-bottom: 1px solid #b0b0b0; }
.group { display: flex; flex-direction: column; min-width: 70px; border-right: 1px solid #dcdde0; }
.tools { display: flex; justify-content: center; height: 87px; padding: 0 3px; }
.col { display: flex; flex-direction: column; align-items: flex-start; padding-top: 1px; }
.sm { height: 28px; padding: 0 4px; gap: 4px; }
.sm .caret { margin-left: 3px; }
.sm.off { color: #aaa; }
.big { flex-direction: column; justify-content: flex-start; width: 40px; padding-top: 5px; }
.big.wide { width: 56px; }
.big svg { width: 32px; height: 32px; margin-bottom: 10px; }
.big svg.caret { width: 7px; height: 4px; margin: 6px 0 0; }
.glabel { height: 25px; gap: 3px; }

/* Work area */
.work { flex: 1; display: flex; min-height: 600px; }
.nav { width: 270px; flex: none; display: flex; flex-direction: column; background: #f5f5f5; border-right: 2px solid #cfd1d3; padding-bottom: 5px; }
.navtabs { display: flex; height: 30px; background: #d0d2d4; border-top: 1px solid #c4c4c4; padding-right: 4px; }
.ntab { background: #dfe0e3; border-right: 1px solid #bcbec0; border-bottom: 1px solid #c8cacc; color: #777; padding: 0 8px; gap: 4px; }
.ntab.active { background: #f5f5f5; color: #333; padding: 0 8px 0 9px; gap: 6px; border-bottom: 0; }
.ntab:last-child { gap: 6px; }
svg.i-nodes { width: 16px; height: 20px; }
svg.i-folders { width: 19px; height: 20px; }
svg.i-fav { width: 18px; height: 18px; }
.navhead { display: flex; align-items: center; height: 29px; margin: 0 5px 0 8px; padding: 0 4px 0 20px; border-bottom: 1px solid #cfd2d4; gap: 11px; }
.navhead h2 { margin: 0 auto 0 0; font-size: 12px; line-height: 16px; font-weight: 400; color: #222; }
.navhead button { gap: 7px; }
.tree { flex: 1; margin: 0 5px 0 8px; padding: 0; list-style: none; background: #fdfdfd; }
.tree li { display: flex; align-items: center; height: 24px; gap: 5px; padding-left: 9px; }
.tree li.root { padding-left: 4px; }
.exp { width: 10px; flex: none; }
.exp svg { width: 7px; height: 9px; }

/* Graphics area */
.canvas { flex: 1; position: relative; background: #b4b4b4; overflow: hidden; }
.scene { position: absolute; inset: 0; width: 100%; height: 100%; }
.viewbar { position: absolute; left: 6px; top: 312px; width: 33px; padding: 1px 4px 2px 3px; background: #f8f8f8; border: 1px solid #c4c7c9; display: flex; flex-direction: column; gap: 3px; }
.viewbar button { position: relative; height: 24px; border: 1px solid transparent; }
.viewbar button:last-child { margin-top: -1px; }
.viewbar .on { background: #dcdee1; border-color: #a8a8a8; }
.viewbar .drop::after { content: ""; position: absolute; right: 0; bottom: 0; border: 2px solid; border-color: transparent #555 #555 transparent; }

.card { position: absolute; width: 117px; background: #fff; border: 1px solid #8b8d90; color: #444; }
.c1 { left: 600px; top: 283px; }
.c2 { left: 597px; top: 361px; }
.c3 { left: 595px; top: 437px; }
.c4 { left: 597px; top: 515px; }
.c5 { left: 596px; top: 600px; }
.c6 { left: 594px; top: 676px; }
.chead { display: flex; align-items: center; justify-content: space-between; height: 22px; padding: 0 5px 0 2px; background: linear-gradient(#f6f6f7, #dcdee0); border-bottom: 1px solid #c0c3c5; }
.chead button { width: 13px; height: 11px; border-radius: 3px; background: #707078; margin-bottom: 3px; }
.chead button::before { content: ""; width: 7px; height: 1px; background: #fff; }
table { width: 100%; border-collapse: collapse; }
th, td { height: 20px; padding: 0; font-weight: 400; text-align: center; line-height: 16px; border-right: 1px solid #e4e6e8; }
tr + tr th, tr + tr td { border-top: 1px solid #e4e6e8; }
th { width: 30px; background: #f8f8f8; }
td { font-weight: 700; color: #777; }
td.u { width: 27px; font-weight: 400; border-right: 0; }

.measure { position: absolute; top: 0; right: 0; width: 350px; padding: 2px; background: #fff; border: 1px solid #d8dadc; border-right: 0; }
.mtitle { display: flex; align-items: center; height: 30px; background: #e6e7e9; border-bottom: 1px solid #c4c6c8; color: #a0a0a0; }
.mtitle span { flex: 1; text-align: center; padding-left: 28px; }
.mtitle button { width: 28px; }
.mtitle svg { width: 11px; height: 11px; }
.mbar { display: flex; height: 29px; background: #eff0f2; border-bottom: 1px solid #b8babc; padding: 0 0 0 1px; }
.mbar button { width: 28px; border: 1px solid transparent; }
.mbar svg { width: 20px; height: 20px; }
.mbar svg.i16 { width: 16px; height: 16px; }
.mbar .on { background: #dcdee1; border-color: #a8a8a8; }
.mbar .msave { width: 36px; gap: 1px; }
.mbar .msave svg { width: 18px; height: 18px; }
.mbar svg.caret { width: 7px; height: 4px; }
.mbar .msave svg.caret { width: 7px; height: 4px; }
.msep { width: 1px; background: #c4c6c8; margin-right: auto; }
.plus { width: 13px; height: 11px; border-radius: 3px; background: linear-gradient(#fff, #fff) center / 7px 1px no-repeat, linear-gradient(#fff, #fff) center / 1px 7px no-repeat, #66666c; }

/* Status bar */
.status { display: flex; align-items: center; height: 38px; padding: 6px 18px 0 6px; border-top: 2px solid #b8b8b8; background: #f1f3f3; }
.sb { width: 22px; height: 22px; margin-right: 4px; border: 1px solid transparent; }
.sb.on { border-color: #b0b0b0; background: #e2e4e6; }
.msg { position: relative; margin: 0 auto 0 5px; padding: 0 0 10px 15px; font-size: 11px; line-height: 16px; border-left: 1px solid #cdcfd1; }
.msg::before { content: ""; position: absolute; left: 6px; top: 5px; width: 5px; height: 5px; border-radius: 50%; background: #17608a; }
.ssep { width: 1px; height: 30px; background: #c8cacc; margin-right: 2px; margin-top: -6px; }
.ssep.far { margin-right: 40px; }
.ssep.near { margin: -6px 4px 0 2px; }
.search { display: flex; height: 24px; border: 1px solid #bcbfc2; background: #fff; margin-top: -8px; }
.search button { width: 27px; border-right: 1px solid #bcbfc2; }
.search button + button { width: 14px; border-right: 0; }
.sel { margin: -8px 32px 0 0; }
.filter { position: relative; display: flex; align-items: center; margin-top: -6px; }
.filter select { appearance: none; width: 177px; height: 25px; padding: 0 8px; border: 1px solid #bcbfc2; background: #fff; border-radius: 0; }
.filter .caret { position: absolute; right: 5px; top: 10px; }
.taskbar { display: flex; justify-content: space-between; height: 8px; background: #0f0f0f; }
svg.bits { width: 360px; height: 8px; }
svg.tray { width: 41px; }

/* Corner watermark */
.watermark { position: absolute; right: 5px; bottom: 5px; width: 206px; height: 62px; background: rgba(255, 255, 255, .38); display: flex; pointer-events: none; }
.rings { width: 60px; height: 60px; }
.wtext { display: flex; flex-direction: column; align-items: flex-end; flex: 1; padding: 4px 7px 0 0; }
.wtext strong { font: 900 29px/32px "Noto Sans CJK SC", sans-serif; color: rgba(80, 175, 110, .75); padding-right: 15px; }
.wtext span { font-size: 15px; line-height: 20px; color: rgba(140, 200, 205, .7); }
```
